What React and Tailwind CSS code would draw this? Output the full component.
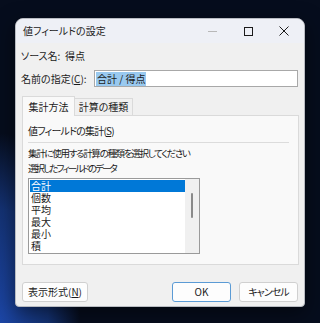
export default function App() {
  const items = ["合計", "個数", "平均", "最大", "最小", "積"];

  return (
    <div
      className="w-[320px] h-[323px] overflow-hidden pt-[18px] pl-[15px] bg-[radial-gradient(ellipse_80px_190px_at_0%_100%,#1c46a6_0%,#143273_60%,#060d1d_100%)] bg-[#060d1d] text-[10px] leading-none text-[#1b1b1b] [font-family:'Noto_Sans_CJK_JP',sans-serif] [font-feature-settings:'palt']"
    >
      <div className="w-[290px] h-[289px] flex flex-col rounded-t-[8px] rounded-b-[4px] border border-[#b9bcc2] bg-[#f0f0f0] shadow-[0_6px_20px_rgba(0,0,0,0.5)] overflow-hidden">
        {/* title bar */}
        <div className="h-[24px] shrink-0 flex items-center bg-[#eef0f6]">
          <span className="pl-[7px]">値フィールドの設定</span>
          <div className="ml-auto flex items-center h-full">
            <div className="w-[36px] flex justify-center">
              <div className="w-[9px] h-px bg-[#b8b8b8]" />
            </div>
            <div className="w-[36px] flex justify-center">
              <div className="w-[9px] h-[9px] border border-[#1b1b1b]" />
            </div>
            <div className="w-[36px] flex justify-center mr-[2px]">
              <svg width="10" height="10" viewBox="0 0 10 10">
                <path d="M0.5 0.5 L9.5 9.5 M9.5 0.5 L0.5 9.5" stroke="#1b1b1b" strokeWidth="1" />
              </svg>
            </div>
          </div>
        </div>

        {/* body */}
        <div className="flex flex-col px-[5px] pt-[4px]">
          <div className="h-[18px] flex items-center">
            <span className="w-[44px]">ソース名:</span>
            <span>得点</span>
          </div>
          <div className="h-[17px] mt-[5px] flex items-center">
            <span className="w-[73px]">
              名前の指定(<span className="underline">C</span>):
            </span>
            <div className="flex-1 mr-[1px] h-[17px] flex items-center bg-white border border-[#a8a8a8] pl-[1px]">
              <span className="bg-[#99c9ef] px-px py-[2px]">合計 / 得点</span>
            </div>
          </div>

          {/* tabs */}
          <div className="mt-[9px] ml-[1px] flex items-end h-[19px]">
            <div className="h-[20px] w-[53px] flex items-center justify-center bg-[#f9f9f9] border border-b-0 border-[#dadada] relative z-10 -mb-px">
              集計方法
            </div>
            <div className="h-[17px] w-[58px] flex items-center justify-center bg-[#f0f0f0] border border-l-0 border-b-0 border-[#dadada]">
              計算の種類
            </div>
          </div>
          <div className="ml-[1px] w-[277px] h-[150px] bg-[#f9f9f9] border border-[#dadada] px-[5px] flex flex-col">
            <div className="h-[22px] mt-[4px] flex items-center tracking-[-0.8px]">
              値フィールドの集計(<span className="underline">S</span>)
            </div>
            <div className="h-px bg-[#dcdcdc] mr-[4px]" />
            <div className="h-[14px] mt-[4px] flex items-center text-[9.5px] tracking-[-1.3px]">
              集計に使用する計算の種類を選択してください
            </div>
            <div className="h-[14px] mt-[1px] flex items-center text-[9.5px] tracking-[-1.9px]">
              選択したフィールドのデータ
            </div>
            <div className="mt-[2px] w-[172px] h-[76px] bg-white border border-[#9a9a9a] flex">
              <div className="flex-1 pt-px pl-px">
                {items.map((t, i) => (
                  <div
                    key={t}
                    className={
                      i === 0
                        ? "h-[12px] flex items-center pl-px bg-[#0078d7] text-white"
                        : "h-[12px] flex items-center pl-px"
                    }
                  >
                    {t}
                  </div>
                ))}
              </div>
              <div className="w-[14px] bg-[#f0f0f0] flex justify-center">
                <div className="mt-[14px] w-[2px] h-[25px] bg-[#8a8a8a] rounded-full" />
              </div>
            </div>
          </div>

          {/* buttons */}
          <div className="mt-[17px] ml-[1px] flex items-center h-[20px]">
            <button className="w-[66px] h-[20px] bg-[#fdfdfd] border border-[#d0d0d0] rounded-[3px] leading-none">
              表示形式(<span className="underline">N</span>)
            </button>
            <button className="ml-auto w-[59px] h-[20px] bg-[#fdfdfd] border border-[#5b9bd5] rounded-[3px] leading-none">
              OK
            </button>
            <button className="ml-[8px] mr-[1px] w-[59px] h-[20px] bg-[#fdfdfd] border border-[#d0d0d0] rounded-[3px] leading-none tracking-[-1px]">
              キャンセル
            </button>
          </div>
        </div>
      </div>
    </div>
  );
}
